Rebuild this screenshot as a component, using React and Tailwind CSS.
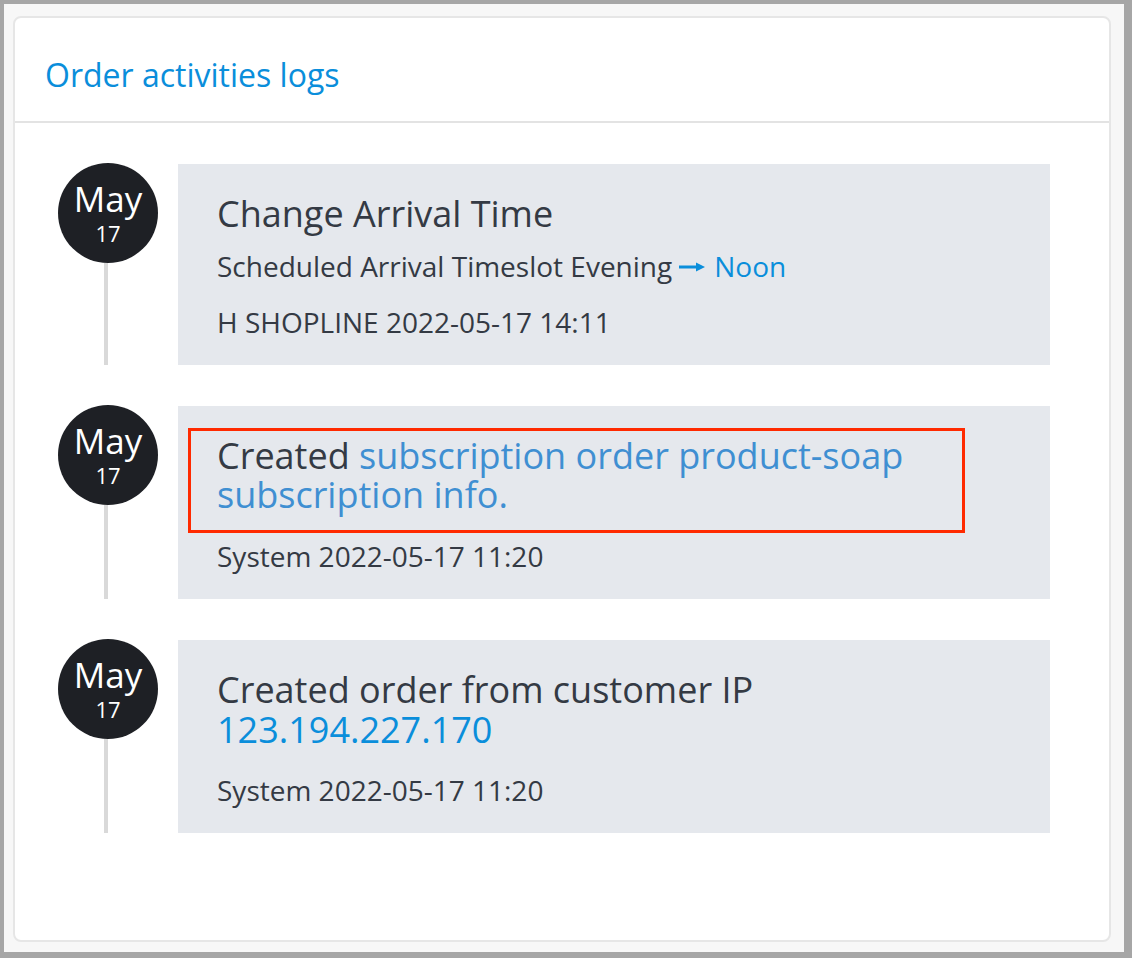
import React from "react";

const font = { fontFamily: '"Open Sans", "Noto Sans", sans-serif' };

function DateBadge({ month, day }) {
  return (
    <div className="flex h-[100px] w-[100px] shrink-0 flex-col items-center justify-center rounded-full bg-[#1e2025] text-white">
      <span className="text-[35px] leading-[40px]">{month}</span>
      <span className="text-[22px] leading-[28px]">{day}</span>
    </div>
  );
}

function Item({ last, children }) {
  return (
    <div className={`flex ${last ? "" : "pb-[41px]"}`}>
      <div className="flex w-[100px] shrink-0 flex-col items-center">
        <div className="-mt-px">
          <DateBadge month="May" day="17" />
        </div>
        <div className="mr-[4px] w-[4px] flex-1 bg-[#d9d9d9]" />
      </div>
      <div className="ml-[20px] w-[872px] bg-[#e5e8ed] px-[39px] pt-[30px] pb-[27px] text-[#343a44]">
        {children}
      </div>
    </div>
  );
}

export default function App() {
  return (
    <div className="min-h-screen bg-[#a6a6a6] pt-[4px] pl-[4px]" style={font}>
      <div className="h-[948px] w-[1120px] bg-[#f7f7f7] pt-[12px] pl-[9px]">
        <div className="h-[926px] w-[1098px] overflow-hidden rounded-[8px] border-2 border-[#e6e6e6] bg-white">
          <div className="flex h-[105px] items-center border-b-2 border-[#e3e3e3] pl-[30px] pt-[10px]">
            <h1 className="text-[32px] text-[#0a8edb]">Order activities logs</h1>
          </div>

          <div className="pl-[43px] pt-[41px]">
            <Item>
              <div className="text-[36px] leading-[40px]">Change Arrival Time</div>
              <div className="mt-[16px] flex items-center text-[28px] leading-[32px]">
                <span>Scheduled Arrival Timeslot Evening</span>
                <svg width="28" height="14" viewBox="0 0 28 14" className="mr-[8px] ml-[6px] mt-[2px]">
                  <path d="M1 7H19" stroke="#0a8edb" strokeWidth="3" />
                  <path d="M18 2.5L27 7L18 11.5Z" fill="#0a8edb" />
                </svg>
                <span className="text-[#0a8edb]">Noon</span>
              </div>
              <div className="mt-[24px] text-[28px] leading-[32px]">H SHOPLINE 2022-05-17 14:11</div>
            </Item>

            <Item>
              <div className="relative">
                <div className="text-[36px] leading-[39px]">
                  Created{" "}
                  <span className="text-[#3f8fd2]">
                    subscription order product-soap
                    <br />
                    subscription info.
                  </span>
                </div>
                <div className="pointer-events-none absolute -top-[8px] -left-[29px] h-[105px] w-[777px] border-[3px] border-[#ff2a00]" />
              </div>
              <div className="mt-[26px] text-[28px] leading-[32px]">System 2022-05-17 11:20</div>
            </Item>

            <Item last>
              <div className="text-[36px] leading-[40px]">
                Created order from customer IP
                <br />
                <span className="text-[#0a8edb]">123.194.227.170</span>
              </div>
              <div className="mt-[24px] text-[28px] leading-[32px]">System 2022-05-17 11:20</div>
            </Item>
          </div>
        </div>
      </div>
    </div>
  );
}
